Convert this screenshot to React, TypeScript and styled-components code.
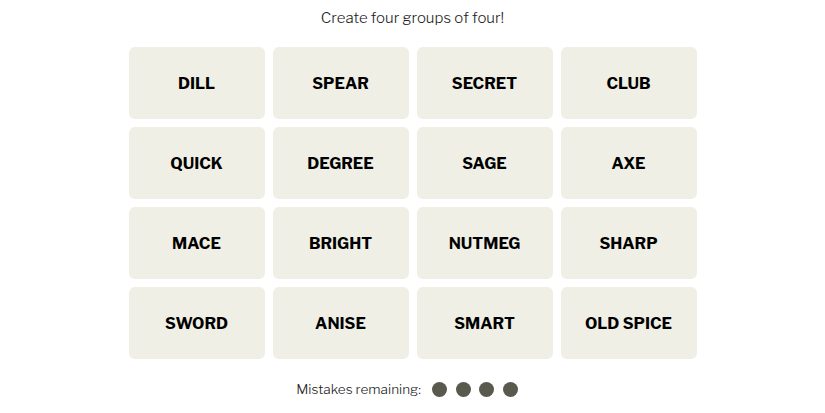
import React from "react";
import styled, { createGlobalStyle } from "styled-components";

const GlobalStyle = createGlobalStyle`
  html, body { margin: 0; padding: 0; background: #ffffff; }
  body { font-family: "Libre Franklin", "Roboto", "Liberation Sans", sans-serif; }
`;

const Page = styled.main`
  display: flex;
  flex-direction: column;
  align-items: center;
  padding-top: 8px;
`;

const Prompt = styled.p`
  margin: 0;
  font-size: 15px;
  line-height: 20px;
  font-weight: 300;
  color: #222;
`;

const Board = styled.div`
  margin-top: 19px;
  display: grid;
  grid-template-columns: repeat(4, 136px);
  grid-auto-rows: 72px;
  gap: 8px;
`;

const Tile = styled.button`
  border: none;
  border-radius: 6px;
  background: #efefe6;
  color: #000;
  font-family: inherit;
  font-size: 16px;
  font-weight: 700;
  text-transform: uppercase;
  display: flex;
  align-items: center;
  justify-content: center;
  padding: 0;
`;

const Mistakes = styled.div`
  margin-top: 20px;
  padding-right: 11px;
  display: flex;
  align-items: center;
  gap: 8.5px;
  font-size: 13.6px;
  line-height: 20px;
  font-weight: 300;
  color: #222;
`;

const Label = styled.span`
  margin-right: 3px;
`;

const Dot = styled.span`
  width: 15px;
  height: 15px;
  border-radius: 50%;
  background: #5a594e;
`;

const words = [
  "DILL", "SPEAR", "SECRET", "CLUB",
  "QUICK", "DEGREE", "SAGE", "AXE",
  "MACE", "BRIGHT", "NUTMEG", "SHARP",
  "SWORD", "ANISE", "SMART", "OLD SPICE",
];

export default function App() {
  return (
    <>
      <GlobalStyle />
      <Page>
        <Prompt>Create four groups of four!</Prompt>
        <Board>
          {words.map((w) => (
            <Tile key={w}>{w}</Tile>
          ))}
        </Board>
        <Mistakes>
          <Label>Mistakes remaining:</Label>
          {[0, 1, 2, 3].map((i) => (
            <Dot key={i} />
          ))}
        </Mistakes>
      </Page>
    </>
  );
}
